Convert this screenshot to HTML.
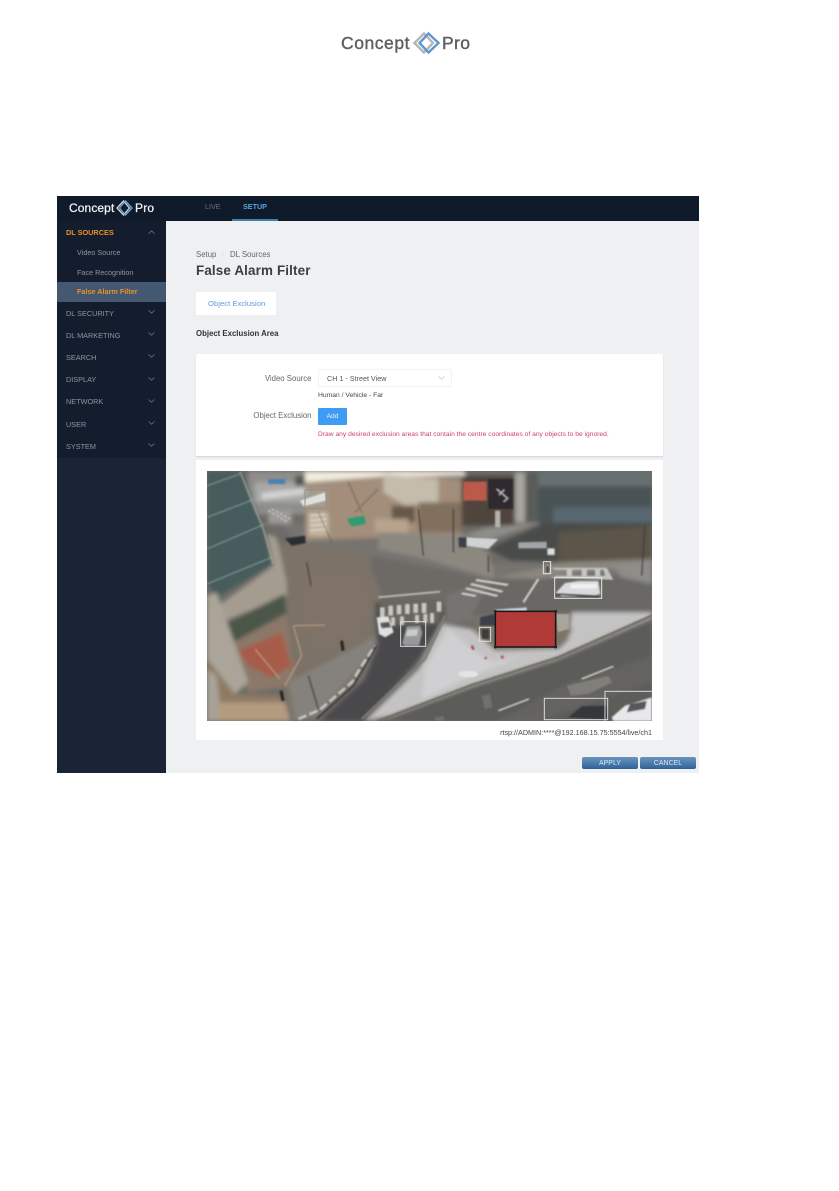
<!DOCTYPE html>
<html><head><meta charset="utf-8">
<style>
html,body{margin:0;padding:0;background:#fff}
#p{position:relative;width:839px;height:1191px;overflow:hidden;background:#fff;font-family:"Liberation Sans",sans-serif;filter:blur(.3px)}
.a{position:absolute;white-space:nowrap}
.m{position:absolute;left:66px;font-size:7.3px;color:#8f959e;line-height:10px}
.s{position:absolute;left:77px;font-size:7.25px;color:#8f959e;line-height:10px}
.c{position:absolute;left:148px;width:7px;height:4px}
</style></head><body><div id="p">

<!-- top logo -->
<div class="a" style="left:341px;top:33px;font-size:17.5px;line-height:20px;color:#5c5f63;letter-spacing:.55px;-webkit-text-stroke:.4px #5c5f63">Concept</div>
<div class="a" style="left:442px;top:33px;font-size:17.5px;line-height:20px;color:#5c5f63;letter-spacing:.35px;-webkit-text-stroke:.4px #5c5f63">Pro</div>
<svg class="a" style="left:412px;top:30px" width="30" height="26" viewBox="0 0 30 26">
<path d="M12 3.5L2.5 13L12 22.5L21 13Z" fill="none" stroke="#b4b6b8" stroke-width="2.4"/>
<path d="M16.5 3.5L26.5 13L16.5 22.5L7.500 13Z" fill="none" stroke="#5f97d2" stroke-width="2.4"/>
</svg>

<!-- app shell -->
<div class="a" style="left:57px;top:196px;width:642px;height:577px;background:#eef0f2"></div>
<div class="a" style="left:57px;top:196px;width:642px;height:25px;background:#0f1a2a"></div>
<div class="a" style="left:57px;top:221px;width:109px;height:237px;background:#141d2d"></div>
<div class="a" style="left:57px;top:458px;width:109px;height:315px;background:#1a2436"></div>

<!-- app logo -->
<div class="a" style="left:69px;top:201px;font-size:12px;line-height:15px;color:#f2f4f6;letter-spacing:.1px;-webkit-text-stroke:.25px #f2f4f6">Concept</div>
<div class="a" style="left:135px;top:201px;font-size:12px;line-height:15px;color:#f2f4f6;letter-spacing:.2px;-webkit-text-stroke:.25px #f2f4f6">Pro</div>
<svg class="a" style="left:115px;top:199px" width="19" height="18" viewBox="0 0 19 18">
<path d="M8.500 2L2 9L8.500 16L14.500 9Z" fill="none" stroke="#d4d8dc" stroke-width="1.300"/>
<path d="M10.500 2L17 9L10.500 16L4.500 9Z" fill="none" stroke="#6fa6dc" stroke-width="1.300"/>
</svg>

<!-- top nav -->
<div class="a" style="left:205px;top:202px;font-size:7.2px;line-height:10px;color:#6a7280">LIVE</div>
<div class="a" style="left:243px;top:202px;font-size:7.2px;line-height:10px;color:#56a4dc;font-weight:bold">SETUP</div>
<div class="a" style="left:232px;top:219px;width:46px;height:1.500px;background:#3f7fa8"></div>

<!-- sidebar -->
<div class="m" style="top:227.500px;color:#e8912a;font-weight:bold">DL SOURCES</div>
<svg class="c" style="top:230px" viewBox="0 0 7 4"><path d="M.5 3.500L3.500 .8L6.500 3.500" fill="none" stroke="#6c7480" stroke-width=".8"/></svg>
<div class="s" style="top:247.500px">Video Source</div>
<div class="s" style="top:267.500px">Face Recognition</div>
<div class="a" style="left:57px;top:282px;width:109px;height:20px;background:#445872"></div>
<div class="s" style="top:286.500px;color:#e8912a;font-weight:bold">False Alarm Filter</div>
<div class="m" style="top:308.500px">DL SECURITY</div>
<svg class="c" style="top:310px" viewBox="0 0 7 4"><path d="M.5 .5L3.500 3.200L6.500 .5" fill="none" stroke="#6c7480" stroke-width=".8"/></svg>
<div class="m" style="top:330.500px">DL MARKETING</div>
<svg class="c" style="top:332px" viewBox="0 0 7 4"><path d="M.5 .5L3.500 3.200L6.500 .5" fill="none" stroke="#6c7480" stroke-width=".8"/></svg>
<div class="m" style="top:352.500px">SEARCH</div>
<svg class="c" style="top:354px" viewBox="0 0 7 4"><path d="M.5 .5L3.500 3.200L6.500 .5" fill="none" stroke="#6c7480" stroke-width=".8"/></svg>
<div class="m" style="top:375px">DISPLAY</div>
<svg class="c" style="top:377px" viewBox="0 0 7 4"><path d="M.5 .5L3.500 3.200L6.500 .5" fill="none" stroke="#6c7480" stroke-width=".8"/></svg>
<div class="m" style="top:397px">NETWORK</div>
<svg class="c" style="top:399px" viewBox="0 0 7 4"><path d="M.5 .5L3.500 3.200L6.500 .5" fill="none" stroke="#6c7480" stroke-width=".8"/></svg>
<div class="m" style="top:419.500px">USER</div>
<svg class="c" style="top:421px" viewBox="0 0 7 4"><path d="M.5 .5L3.500 3.200L6.500 .5" fill="none" stroke="#6c7480" stroke-width=".8"/></svg>
<div class="m" style="top:441.500px">SYSTEM</div>
<svg class="c" style="top:443px" viewBox="0 0 7 4"><path d="M.5 .5L3.500 3.200L6.500 .5" fill="none" stroke="#6c7480" stroke-width=".8"/></svg>

<!-- header -->
<div class="a" style="left:196px;top:249.500px;font-size:7.8px;line-height:10px;color:#666">Setup</div>
<div class="a" style="left:222px;top:249.500px;font-size:7.8px;line-height:10px;color:#ddd">/</div>
<div class="a" style="left:230px;top:249.500px;font-size:7.8px;line-height:10px;color:#666">DL Sources</div>
<div class="a" style="left:196px;top:262.500px;font-size:13.4px;line-height:16px;color:#3a3d42;font-weight:bold;letter-spacing:.15px">False Alarm Filter</div>

<div class="a" style="left:196px;top:292px;width:80px;height:23px;background:#fff"></div>
<div class="a" style="left:208px;top:298.500px;font-size:7.7px;line-height:10px;color:#5f9bd8">Object Exclusion</div>
<div class="a" style="left:196px;top:328.500px;font-size:7.8px;line-height:10px;color:#333;font-weight:bold">Object Exclusion Area</div>

<!-- form card -->
<div class="a" style="left:196px;top:354px;width:467px;height:102px;background:#fff;box-shadow:0 1px 1px #d4d6d8"></div>
<div class="a" style="left:196px;top:373.500px;width:115.500px;text-align:right;font-size:7.8px;line-height:10px;color:#666">Video Source</div>
<div class="a" style="left:318px;top:369px;width:132px;height:16px;background:#fff;border:1px solid #f1f2f3;border-radius:2px"></div>
<div class="a" style="left:327px;top:373.500px;font-size:7.2px;line-height:10px;color:#555">CH 1 - Street View</div>
<svg class="a" style="left:438px;top:376px" width="7" height="4" viewBox="0 0 7 4"><path d="M.5 .5L3.500 3.200L6.500 .5" fill="none" stroke="#bbb" stroke-width=".7"/></svg>
<div class="a" style="left:318px;top:390.500px;font-size:6.75px;line-height:10px;color:#444">Human / Vehicle - Far</div>
<div class="a" style="left:196px;top:411px;width:115.500px;text-align:right;font-size:7.8px;line-height:10px;color:#666">Object Exclusion</div>
<div class="a" style="left:318px;top:408px;width:29px;height:17px;background:#3f9cf5;border-radius:1px;color:#e8f3fe;font-size:6.6px;line-height:17px;text-align:center">Add</div>
<div class="a" style="left:318px;top:429.500px;font-size:6.7px;line-height:10px;color:#d0406e">Draw any desired exclusion areas that contain the centre coordinates of any objects to be ignored.</div>

<!-- image card -->
<div class="a" style="left:196px;top:460px;width:467px;height:280px;background:#fff"></div>

<svg class="a" style="left:207px;top:471px" width="445" height="250" viewBox="6 6 1335 750">
<defs>
<filter id="b" x="-3%" y="-3%" width="106%" height="106%"><feGaussianBlur stdDeviation="6"/></filter>
<filter id="b2" x="-3%" y="-3%" width="106%" height="106%"><feGaussianBlur stdDeviation="2.500"/></filter>
<clipPath id="cp"><rect x="6" y="6" width="1335" height="750"/></clipPath>
</defs>
<g clip-path="url(#cp)">
<rect x="6" y="6" width="1335" height="750" fill="#6d6b68"/>
<g filter="url(#b)">
<!-- mid road/intersection -->
<polygon points="210,150 520,200 860,280 1340,280 1340,430 720,460 500,440 300,240" fill="#76736f"/>
<polygon points="500,260 850,330 720,380 500,390" fill="#6d6a66"/>
<polygon points="860,330 1340,320 1340,430 800,440" fill="#696765"/>
<!-- top street -->
<rect x="130" y="6" width="180" height="130" fill="#8d8d8a"/>
<rect x="150" y="40" width="150" height="60" fill="#a8a9a8"/>
<polygon points="170,72 300,58 300,75 170,92" fill="#d5d6d6"/>
<rect x="190" y="120" width="70" height="45" fill="#9c9a96"/>
<rect x="270" y="20" width="30" height="30" fill="#54524e"/>
<!-- trees and buildings top center -->
<polygon points="300,30 530,8 770,30 770,200 640,200 300,215" fill="#a28e7a"/>
<polygon points="300,6 780,6 780,20 530,22 300,40" fill="#f2ecdf"/>
<polygon points="535,15 700,30 700,100 600,110 535,70" fill="#c5bcac"/>
<rect x="560" y="110" width="70" height="50" fill="#66584a"/>
<rect x="310" y="130" width="60" height="70" fill="#c4b8a4"/>
<rect x="510" y="150" width="100" height="40" fill="#b8a48e"/>
<rect x="640" y="100" width="130" height="90" fill="#82705e"/>
<polygon points="300,60 365,62 365,120 300,118" fill="#a59c8f"/>
<!-- shops -->
<rect x="770" y="20" width="160" height="150" fill="#4f443d"/>
<rect x="930" y="10" width="30" height="150" fill="#a8a6a0"/>
<rect x="960" y="10" width="50" height="150" fill="#5a5c5a"/>
<!-- right building -->
<rect x="1000" y="6" width="341" height="160" fill="#4a5355"/>
<rect x="1000" y="6" width="341" height="46" fill="#666f70"/>
<rect x="1045" y="115" width="295" height="45" fill="#596770"/>
<!-- sidewalk -->
<polygon points="520,190 770,195 850,250 870,325 1000,300 1060,280 1340,270 1340,300 1200,300 1000,330 850,325 680,275 520,240" fill="#8c8880"/>
<polygon points="1225,290 1340,275 1340,345 1250,325" fill="#8e8d8a"/>
<polygon points="770,200 850,175 1010,160 920,190 850,215" fill="#8f8d88"/>
<!-- dark triangle right -->
<polygon points="850,240 1010,165 1340,165 1340,265 1060,280 920,275" fill="#494c4a"/>
<polygon points="1060,190 1340,170 1340,270 1060,280" fill="#5c554a"/>
<!-- plaza -->
<polygon points="220,225 300,225 480,250 530,380 500,440 510,520 470,630 330,745 250,756 235,640 250,470 225,340" fill="#7c7268"/>
<polygon points="300,300 480,300 500,420 460,520 330,560 280,440" fill="#7f7266"/>
<!-- building base ring -->
<polygon points="185,195 215,205 245,340 245,380 60,455 40,410 205,290" fill="#a59c90"/>
<!-- glass -->
<polygon points="6,6 110,6 170,170 205,285 35,385 6,345" fill="#465c5c"/>
<!-- planting -->
<polygon points="60,465 238,375 245,430 85,520" fill="#4c5748"/>
<!-- brown ground -->
<polygon points="85,520 245,435 270,650 130,670 100,600" fill="#8b7868"/>
<polygon points="100,545 230,490 260,590 200,625 130,590" fill="#a75b48"/>
<!-- pillar -->
<polygon points="6,380 35,370 130,640 90,675 6,570" fill="#aaa598"/>
<polygon points="6,570 90,675 230,680 250,756 6,756" fill="#8d7a64"/>
<polygon points="6,600 35,620 50,756 6,756" fill="#a9a298"/>
<polygon points="40,700 240,700 255,756 40,756" fill="#b39b80"/>
<!-- sidewalk right of plaza -->
<polygon points="250,640 460,530 510,500 510,540 335,740 270,756" fill="#85817c"/>
<!-- dark road -->
<polygon points="345,756 480,630 520,530 515,470 510,400 720,385 720,440 640,570 480,756" fill="#4a4a4c"/>
<polygon points="520,390 725,385 700,465 565,470 530,450" fill="#68665f"/>
<!-- snow -->
<polygon points="480,756 640,600 712,465 800,480 870,540 1060,540 1090,510 1100,430 1340,430 1340,445 1050,570 800,650 560,740" fill="#c4c3c3"/>
<polygon points="660,600 730,480 800,540 860,580 960,560 800,620 650,690" fill="#d0d0d2"/>
<!-- dirt around excl -->
<polygon points="820,440 1090,430 1100,490 1050,540 870,545 810,490" fill="#7d7366"/>
<!-- road bottom -->
<polygon points="530,756 800,655 1060,575 1340,455 1340,756" fill="#5c5b59"/>
<polygon points="880,756 1090,640 1340,560 1340,640 1200,690 1000,756" fill="#656461"/>
</g>
<g filter="url(#b2)">
<!-- shop signs -->
<rect x="775" y="38" width="70" height="57" fill="#bb5a4c"/>
<rect x="850" y="30" width="74" height="90" fill="#2d2b2e"/>
<path d="M875 60L908 88L896 98M898 62L882 78" stroke="#c8c8c8" stroke-width="3.500" fill="none"/>
<rect x="870" y="125" width="16" height="50" fill="#b4b2aa"/>
<rect x="190" y="30" width="50" height="15" fill="#4a81b0"/>
<!-- building glass lines -->
<path d="M6 50L105 15M6 145L150 90M6 240L180 165M6 345L200 265" stroke="#8fa3a3" stroke-width="4" fill="none" opacity=".7"/>
<path d="M105 8L175 180L205 285" stroke="#a8aca4" stroke-width="5" fill="none" opacity=".7"/>
<!-- crosswalk ped TL -->
<path d="M190 125L250 160M200 120L255 150" stroke="#d0d0cc" stroke-width="5" stroke-dasharray="8 6" fill="none" opacity=".8"/>
<path d="M315 140L360 135M315 155L365 150M315 170L365 165M315 185L365 180" stroke="#ddd5c6" stroke-width="5" opacity=".8"/>
<polygon points="285,95 360,70 362,95 295,112" fill="#e0e0dc"/>
<polygon points="425,150 478,140 482,165 440,172" fill="#2f9b72"/>
<polygon points="240,208 300,200 302,222 260,230" fill="#2a2d30"/>
<!-- white barrier -->
<polygon points="780,205 880,210 850,240 770,228" fill="#d0d2d4"/>
<polygon points="760,205 785,205 785,235 762,235" fill="#3c4048"/>
<polygon points="940,220 1025,218 1025,238 940,238" fill="#a0a6a8"/>
<rect x="1027" y="238" width="22" height="20" fill="#dcdcd8"/>
<!-- tree trunks -->
<path d="M640 120L655 260M745 120L745 250M850 260L850 310M305 280L318 350M310 620L340 720M1320 170L1310 320" stroke="#3d3935" stroke-width="4" fill="none" opacity=".8"/>
<path d="M265 470L360 468M265 470L290 560L240 650M150 540L225 630" stroke="#c8a98a" stroke-width="5" fill="none" opacity=".6"/>
<path d="M340 130L380 220M430 40L470 130M520 60L450 130" stroke="#54493e" stroke-width="3" fill="none" opacity=".5"/>
<!-- crosswalks -->
<g fill="#c8c7c4">
<path d="M772 370L815 378L810 384L768 376ZM785 355L880 378L875 384L780 361ZM800 342L895 365L890 371L795 348ZM815 330L912 345L906 351L810 336Z" fill="#cfcdc8"/>
<rect x="525" y="415" width="14" height="30"/><rect x="550" y="410" width="14" height="30"/><rect x="575" y="408" width="14" height="28"/><rect x="600" y="405" width="14" height="30"/><rect x="625" y="404" width="14" height="28"/><rect x="650" y="402" width="14" height="30"/><rect x="695" y="398" width="14" height="30"/>
<rect x="558" y="445" width="12" height="25"/><rect x="585" y="442" width="12" height="26"/><rect x="630" y="438" width="12" height="24"/><rect x="655" y="435" width="12" height="26"/><rect x="675" y="432" width="12" height="30"/>
<path d="M1040 296L1205 296L1225 332L1035 326L1055 320L1200 320L1195 302L1050 302Z" fill="#c4c3c0"/>
<path d="M1085 300h16v20h-16zM1130 300h16v20h-16zM1170 300h16v20h-16z"/>
</g>
<path d="M520 385L705 368" stroke="#c8c6c0" stroke-width="5"/>
<path d="M1000 330L955 400" stroke="#d8d6d0" stroke-width="6"/>
<!-- snow edge -->
<path d="M280 750L345 722L440 640L470 590L510 530" stroke="#d4d4d4" stroke-width="8" stroke-dasharray="26 10" fill="none" opacity=".85"/>
<path d="M335 750L445 650L515 530" stroke="#37373a" stroke-width="5" fill="none"/>
<path d="M520 756L800 648L1060 565L1340 440" stroke="#6e6a5e" stroke-width="7" fill="none"/>
<path d="M470 750L660 570L720 440" stroke="#7e7c74" stroke-width="7" fill="none"/>
<!-- people / debris -->
<path d="M840 565l4 4M890 560l4 8M800 530l6 12" stroke="#b04648" stroke-width="7"/>
<path d="M228 665l6 30M410 515l4 30" stroke="#26241f" stroke-width="9"/>
<!-- cars -->
<path d="M515 445L550 442L566 490L540 505L522 495Z" fill="#dfe0e0"/>
<path d="M525 462L552 458L558 475L530 478Z" fill="#55585a"/>
<path d="M592 522L605 472L645 470L652 490L642 530L598 530Z" fill="#96999a"/>
<path d="M607 482L640 480L636 500L602 502Z" fill="#c8cccc"/>
<path d="M1052 372L1080 342L1120 336H1180L1186 375L1160 382H1070Z" fill="#d8dadc"/>
<path d="M1100 345H1175V358H1095Z" fill="#f0f0f2"/>
<path d="M1050 375L1180 382" stroke="#2c2c30" stroke-width="5"/>
<polygon points="825,445 870,435 870,470 825,470" fill="#3c4048"/>
<polygon points="1052,435 1092,435 1092,480 1058,490" fill="#a8a69a"/>
<polygon points="870,422 965,415 965,428 870,430" fill="#c8d2dc"/>
<rect x="830" y="480" width="22" height="30" fill="#3b3b3a"/>
<rect x="1020" y="285" width="14" height="26" fill="#8a8a84"/><rect x="1024" y="292" width="7" height="18" fill="#35353a"/>
<path d="M1220 745L1260 710L1340 685V756H1225Z" fill="#e8e8ea"/>
<path d="M1275 705L1325 695L1320 720L1265 730Z" fill="#55595e"/>
<path d="M1090 745L1130 712L1205 710L1210 752Z" fill="#36373a"/>
<path d="M1085 650L1210 620L1222 640L1150 675L1098 680Z" fill="#7f7e78"/>
<!-- road markings -->
<path d="M1130 630L1225 592M880 725L972 690" stroke="#e4e4e4" stroke-width="4"/>
<path d="M830 680l25 -5l8 40l-25 5zM690 745l25 -5l5 16l-30 0z" fill="#807f7b" opacity=".6"/>
<ellipse cx="790" cy="615" rx="30" ry="10" fill="#e4e4e6"/>
</g>
<!-- detection boxes -->
<g fill="none" stroke="#d8dcdc" stroke-width="3">
<rect x="1049" y="326" width="141" height="62" stroke="#e4e6e6"/>
<rect x="587" y="458" width="75" height="74"/>
<rect x="823" y="475" width="34" height="42"/>
<rect x="1018" y="688" width="190" height="64"/>
<rect x="1200" y="667" width="145" height="92"/>
<rect x="1015" y="278" width="22" height="36" stroke="#e8e8e8"/>
<rect x="300" y="62" width="64" height="56" stroke="#94908a"/>
</g>
<!-- exclusion area -->
<rect x="871" y="427" width="181" height="107" fill="#b03a38" stroke="#161616" stroke-width="4.500"/>
<circle cx="871" cy="427" r="4.500" fill="#222"/><circle cx="1052" cy="427" r="4.500" fill="#222"/><circle cx="871" cy="534" r="4.500" fill="#222"/><circle cx="1052" cy="534" r="4.500" fill="#222"/>
</g>
</svg>

<div class="a" style="left:452px;top:727.500px;width:200px;text-align:right;font-size:7.2px;line-height:10px;color:#444">rtsp://ADMIN:****@192.168.15.75:5554/live/ch1</div>

<!-- buttons -->
<div class="a" style="left:582px;top:757px;width:56px;height:12px;background:linear-gradient(#6a94bf,#2f6398);border-radius:2px;color:#dfe8f2;font-size:7px;line-height:13px;text-align:center">APPLY</div>
<div class="a" style="left:640px;top:757px;width:56px;height:12px;background:linear-gradient(#6a94bf,#2f6398);border-radius:2px;color:#dfe8f2;font-size:7px;line-height:13px;text-align:center">CANCEL</div>

</div></body></html>
